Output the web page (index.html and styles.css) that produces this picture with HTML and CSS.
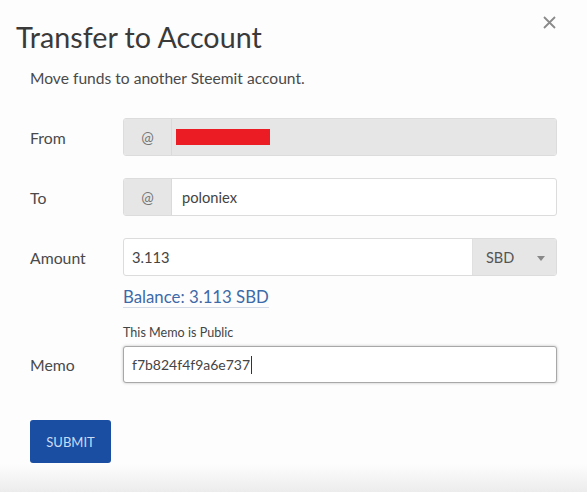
FILE: index.html
```html
<!DOCTYPE html>
<html>
<head>
<meta charset="utf-8">
<link rel="stylesheet" href="styles.css">
</head>
<body>
<div class="modal">
  <button class="close" aria-label="Close">
    <svg width="13" height="13" viewBox="0 0 13 13"><path d="M1 1L12 12M12 1L1 12" stroke="#8a8a8a" stroke-width="1.8" fill="none"/></svg>
  </button>
  <h1 class="title">Transfer to Account</h1>
  <p class="subtitle">Move funds to another Steemit account.</p>

  <div class="row row-from">
    <label class="label">From</label>
    <div class="group disabled">
      <span class="addon">@</span>
      <div class="field"><span class="redact"></span></div>
    </div>
  </div>

  <div class="row row-to">
    <label class="label">To</label>
    <div class="group">
      <span class="addon">@</span>
      <div class="field">poloniex</div>
    </div>
  </div>

  <div class="row row-amount">
    <label class="label">Amount</label>
    <div class="group">
      <div class="field first">3.113</div>
      <div class="select">SBD <span class="caret"></span></div>
    </div>
  </div>
  <div class="balance-row"><a class="balance">Balance: 3.113 SBD</a></div>

  <div class="memo-note">This Memo is Public</div>
  <div class="row row-memo">
    <label class="label">Memo</label>
    <div class="group focus">
      <div class="field first memo">f7b824f4f9a6e737<span class="cursor"></span></div>
    </div>
  </div>

  <button class="submit">SUBMIT</button>
</div>
<div class="shade"></div>
</body>
</html>
```
FILE: styles.css
```css
html, body { margin: 0; padding: 0; }
body {
  width: 587px;
  height: 492px;
  background: #fdfdfd;
  font-family: Lato, "Liberation Sans", sans-serif;
  color: #333;
  overflow: hidden;
  position: relative;
}
.modal {
  position: relative;
  padding: 0 30px 0 30px;
  height: 472px;
  box-sizing: border-box;
}
.close {
  position: absolute;
  top: 16px;
  left: 543px;
  border: 0;
  background: none;
  padding: 0;
  width: 13px;
  height: 13px;
  line-height: 0;
}
.title {
  margin: 0;
  padding-top: 20px;
  margin-left: -14px;
  font-size: 28.7px;
  font-weight: 400;
  line-height: 34px;
  color: #3a3a3a;
}
.subtitle {
  margin: 15px 0 0 0;
  font-size: 15.6px;
  line-height: 18px;
  color: #4a4a4a;
}
.row {
  display: flex;
  align-items: center;
}
.row-from { margin-top: 31px; }
.row-to { margin-top: 22px; }
.row-amount { margin-top: 22px; }
.label {
  width: 93px;
  font-size: 15.8px;
  color: #4a4a4a;
}
.group {
  flex: 1;
  display: flex;
  height: 38px;
  box-sizing: border-box;
  border: 1px solid #dcdcdc;
  border-radius: 3px;
  background: #fff;
  overflow: hidden;
}
.addon {
  width: 47px;
  background: #e6e6e6;
  border-right: 1px solid #dadada;
  display: flex;
  align-items: center;
  justify-content: center;
  font-size: 15px;
  color: #777;
}
.field {
  flex: 1;
  display: flex;
  align-items: center;
  padding-left: 10px;
  font-size: 14.7px;
  color: #444;
}
.field.first { padding-left: 8px; }
.field.memo { font-size: 14px; }
.disabled .field { background: #e6e6e6; }
.redact {
  display: block;
  width: 94px;
  height: 16px;
  background: #ec1c24;
  margin-left: -6px;
}
.select {
  width: 84px;
  background: #e6e6e6;
  border-left: 1px solid #e0e0e0;
  display: flex;
  align-items: center;
  padding-left: 13px;
  box-sizing: border-box;
  font-size: 14.5px;
  color: #555;
  position: relative;
}
.caret {
  position: absolute;
  right: 11px;
  top: 17px;
  width: 0;
  height: 0;
  border-left: 4px solid transparent;
  border-right: 4px solid transparent;
  border-top: 5px solid #888;
}
.balance-row {
  margin-top: 11px;
  padding-left: 93px;
  line-height: 20px;
}
.balance {
  font-size: 16.8px;
  color: #3d6aa8;
  border-bottom: 1px solid #d5dbe6;
}
.memo-note {
  margin-top: 19px;
  padding-left: 93px;
  font-size: 12.6px;
  line-height: 14px;
  color: #444;
}
.row-memo { margin-top: 6px; }
.group.focus {
  height: 37px;
  border: 1px solid #a8a8a8;
  box-shadow: 0 0 3px rgba(0,0,0,0.25);
}
.cursor {
  display: inline-block;
  width: 1px;
  height: 18px;
  background: #333;
  margin-left: 1px;
}
.submit {
  display: block;
  margin-top: 37px;
  width: 81px;
  height: 43px;
  border: 0;
  border-radius: 3px;
  background: #1a4ea3;
  color: #c9dcf3;
  font-family: Lato, "Liberation Sans", sans-serif;
  font-size: 13px;
  padding: 0;
}
.shade {
  position: absolute;
  left: 0;
  right: 0;
  bottom: 0;
  height: 28px;
  background: linear-gradient(to bottom, #fdfdfd, #ececec);
}
```
